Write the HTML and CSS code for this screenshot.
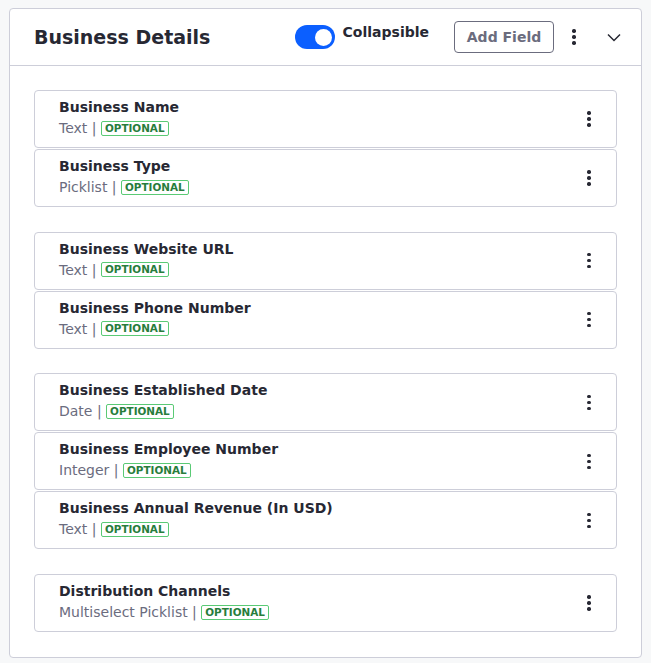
FILE: index.html
```html
<!DOCTYPE html>
<html>
<head>
<meta charset="utf-8">
<link rel="stylesheet" href="styles.css">
</head>
<body>
<div class="card">
  <div class="card-header">
    <h2 class="title">Business Details</h2>
    <div class="actions">
      <label class="toggle-wrap">
        <span class="toggle"><span class="knob"></span></span>
        <span class="toggle-label">Collapsible</span>
      </label>
      <button class="btn">Add Field</button>
      <span class="kebab header-kebab"><i></i><i></i><i></i></span>
      <svg class="chevron" width="16" height="16" viewBox="0 0 16 16"><path d="M2 5.5 L8 11.5 L14 5.5" fill="none" stroke="#272833" stroke-width="1.5"/></svg>
    </div>
  </div>
  <div class="card-body">
    <div class="group">
      <div class="row"><div class="info"><div class="name">Business Name</div><div class="meta">Text | <span class="badge">OPTIONAL</span></div></div><span class="kebab"><i></i><i></i><i></i></span></div>
      <div class="row"><div class="info"><div class="name">Business Type</div><div class="meta">Picklist | <span class="badge">OPTIONAL</span></div></div><span class="kebab"><i></i><i></i><i></i></span></div>
    </div>
    <div class="group">
      <div class="row"><div class="info"><div class="name">Business Website URL</div><div class="meta">Text | <span class="badge">OPTIONAL</span></div></div><span class="kebab"><i></i><i></i><i></i></span></div>
      <div class="row"><div class="info"><div class="name">Business Phone Number</div><div class="meta">Text | <span class="badge">OPTIONAL</span></div></div><span class="kebab"><i></i><i></i><i></i></span></div>
    </div>
    <div class="group">
      <div class="row"><div class="info"><div class="name">Business Established Date</div><div class="meta">Date | <span class="badge">OPTIONAL</span></div></div><span class="kebab"><i></i><i></i><i></i></span></div>
      <div class="row"><div class="info"><div class="name">Business Employee Number</div><div class="meta">Integer | <span class="badge">OPTIONAL</span></div></div><span class="kebab"><i></i><i></i><i></i></span></div>
      <div class="row"><div class="info"><div class="name">Business Annual Revenue (In USD)</div><div class="meta">Text | <span class="badge">OPTIONAL</span></div></div><span class="kebab"><i></i><i></i><i></i></span></div>
    </div>
    <div class="group">
      <div class="row"><div class="info"><div class="name">Distribution Channels</div><div class="meta">Multiselect Picklist | <span class="badge">OPTIONAL</span></div></div><span class="kebab"><i></i><i></i><i></i></span></div>
    </div>
  </div>
</div>
</body>
</html>
```
FILE: styles.css
```css
* { box-sizing: border-box; }
html, body { margin: 0; }
body {
  background: #f7f8f9;
  padding: 8px 9px;
  font-family: "DejaVu Sans", sans-serif;
  color: #272833;
}
.card {
  background: #fff;
  border: 1px solid #cdced9;
  border-radius: 4px;
}
.card-header {
  height: 57px;
  border-bottom: 1px solid #cdced9;
  display: flex;
  align-items: center;
  justify-content: space-between;
  padding: 0 19px 0 24px;
}
.title {
  margin: 0;
  font-size: 19px;
  font-weight: bold;
  line-height: 24px;
}
.actions {
  display: flex;
  align-items: center;
}
.toggle-wrap {
  display: flex;
  align-items: flex-start;
  height: 32px;
  padding-top: 3px;
}
.toggle {
  width: 40px;
  height: 24px;
  border-radius: 12px;
  background: #0b5fff;
  display: flex;
  align-items: center;
  justify-content: flex-end;
  padding-right: 3px;
  margin-top: 1px;
}
.knob {
  width: 17px;
  height: 17px;
  border-radius: 50%;
  background: #fff;
}
.toggle-label {
  margin-left: 8px;
  font-size: 14px;
  font-weight: bold;
  line-height: 20px;
  margin-top: -2px;
}
.btn {
  margin-left: 25px;
  width: 100px;
  height: 32px;
  border: 1px solid #6b6c7e;
  border-radius: 4px;
  background: #fff;
  color: #6b6c7e;
  font-family: "DejaVu Sans", sans-serif;
  font-size: 14px;
  font-weight: bold;
  padding: 0;
}
.kebab {
  display: flex;
  flex-direction: column;
  align-items: center;
  gap: 2.6px;
  width: 16px;
}
.kebab i {
  display: block;
  width: 3.4px;
  height: 3.4px;
  border-radius: 50%;
  background: #272833;
}
.header-kebab { margin-left: 12px; }
.chevron { margin-left: 24px; display: block; }
.card-body {
  padding: 24px 24px 25px;
  display: flex;
  flex-direction: column;
  gap: 24.7px;
}
.group {
  display: flex;
  flex-direction: column;
  gap: 1px;
}
.row {
  height: 58px;
  border: 1px solid #cdced9;
  border-radius: 4px;
  display: flex;
  align-items: center;
  justify-content: space-between;
  padding: 0 19px 0 24px;
}
.info { margin-top: -2px; }
.name {
  font-size: 14px;
  font-weight: bold;
  line-height: 20px;
  margin-top: -1px;
}
.meta {
  font-size: 14px;
  line-height: 20px;
  color: #6b6c7e;
  margin-top: 1px;
  display: flex;
  align-items: center;
  white-space: pre;
}
.badge {
  display: inline-block;
  border: 1px solid #5aca75;
  border-radius: 2px;
  color: #287d3c;
  font-size: 10.4px;
  font-weight: bold;
  line-height: 13px;
  padding: 0 3px;
}
```
